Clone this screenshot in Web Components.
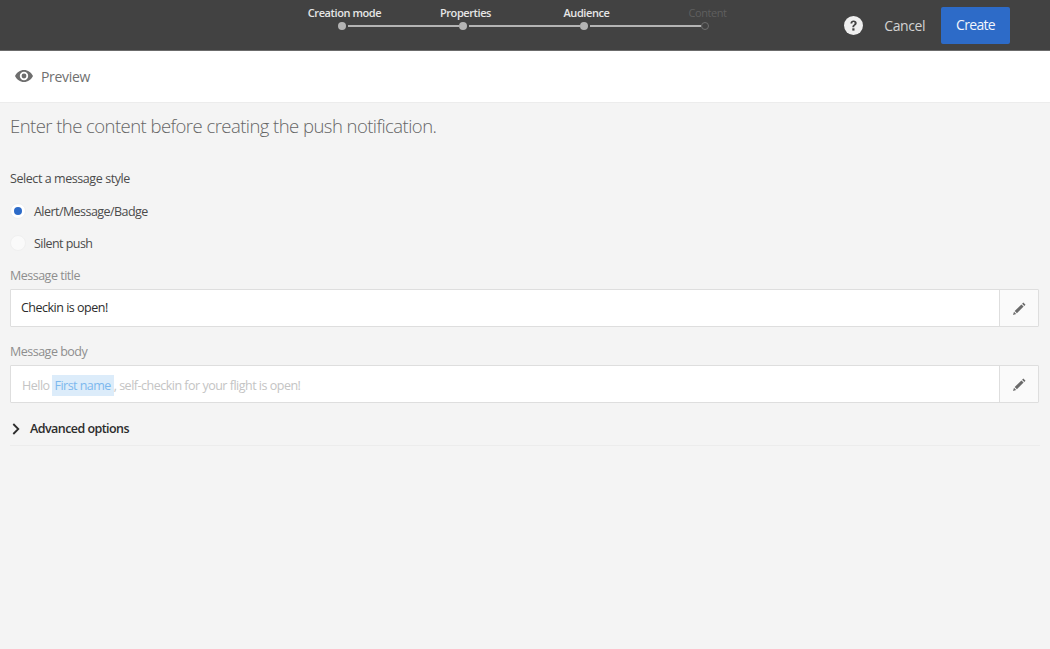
<!DOCTYPE html>
<html lang="en">

<head>
  <meta charset="UTF-8">
  <title>Create push notification</title>
  <style>
    html, body {
      margin: 0;
      height: 100%;
      background: #f4f4f4;
    }

    body {
      font-family: "Open Sans", "Noto Sans", "Liberation Sans", sans-serif;
      overflow: hidden;
    }

    .chip {
      display: inline-block;
      margin-left: 2px;
      padding: 0 3px;
      height: 21px;
      line-height: 21px;
      background: #dcecfa;
      color: #7cb8ee;
      letter-spacing: -0.55px;
    }

    .hint {
      color: #c4c4c4;
    }
  </style>
</head>

<body>

  <wizard-header>
    <wizard-step slot="steps" label="Creation mode"></wizard-step>
    <wizard-step slot="steps" label="Properties"></wizard-step>
    <wizard-step slot="steps" label="Audience"></wizard-step>
    <wizard-step slot="steps" label="Content" pending last></wizard-step>
  </wizard-header>

  <preview-bar>Preview</preview-bar>

  <content-form>
    <radio-option checked>Alert/Message/Badge</radio-option>
    <radio-option>Silent push</radio-option>

    <text-field label="Message title" style="margin-top:7px;--value-pad:0 0 1px 10px"><span style="color:#2c2c2c">Checkin is open!</span></text-field>
    <text-field label="Message body" style="margin-top:15px;--value-pad:2px 0 0 10px">
      <span class="hint" style="padding-left:1px">Hello</span><span class="chip">First name</span><span class="hint">, self-checkin for your flight is open!</span>
    </text-field>

    <advanced-toggle>Advanced options</advanced-toggle>
  </content-form>

  <template id="wizard-header">
    <style>
      :host {
        display: flex;
        align-items: center;
        box-sizing: border-box;
        height: 51px;
        background: #424242;
        border-bottom: 1px solid #6b6b6b;
      }

      .steps {
        display: flex;
        margin-left: 284px;
        align-self: flex-start;
      }

      .actions {
        display: flex;
        align-items: center;
        margin-left: auto;
        margin-right: 40px;
      }

      .help {
        display: block;
        margin-right: 21px;
      }

      .cancel {
        color: #d3d3d3;
        font-size: 14px;
        letter-spacing: -0.42px;
        margin-right: 16px;
      }

      .create {
        width: 69px;
        height: 37px;
        line-height: 36px;
        text-align: center;
        background: #2d6bc8;
        border-radius: 2px;
        color: #f2f6fc;
        font-size: 14px;
        letter-spacing: -0.7px;
      }
    </style>
    <div class="steps"><slot name="steps"></slot></div>
    <div class="actions">
      <svg class="help" width="19" height="19" viewBox="0 0 19 19">
        <circle cx="9.5" cy="9.5" r="9.5" fill="#efefef"></circle>
        <path d="M6.4 7.4c.1-1.9 1.4-3 3.2-3 1.800 0 3.100 1 3.100 2.700 0 1.200-.6 1.900-1.500 2.500-.8.500-1 .9-1 1.700H8.400c-.1-1.300.3-2 1.200-2.600.7-.5 1-.9 1-1.500 0-.7-.4-1.100-1.100-1.100-.7 0-1.100.5-1.200 1.300z" fill="#424242"></path>
        <rect x="8.300" y="12.300" width="2.200" height="2.300" fill="#424242"></rect>
      </svg>
      <span class="cancel">Cancel</span>
      <span class="create">Create</span>
    </div>
  </template>

  <template id="wizard-step">
    <style>
      :host {
        display: block;
        width: 121px;
        position: relative;
        height: 34px;
      }

      .label {
        text-align: center;
        height: 20px;
        padding-top: 5px;
        line-height: 16px;
        font-size: 11px;
        font-weight: 600;
        letter-spacing: -0.42px;
        color: #e6e6e6;
        white-space: nowrap;
      }

      .track {
        display: flex;
        align-items: center;
        height: 8px;
        margin-top: -3px;
        padding-left: 54px;
      }

      .dot {
        flex: none;
        box-sizing: border-box;
        width: 8px;
        height: 8px;
        border-radius: 50%;
        background: #b4b4b4;
      }

      .line {
        flex: none;
        width: 111px;
        height: 2px;
        margin-left: 2px;
        margin-right: -64px;
        background: #b4b4b4;
      }

      :host([pending]) .label {
        color: #5f5f5f;
        font-weight: 400;
      }

      :host([pending]) .dot {
        background: transparent;
        border: 1px solid #6f6f6f;
      }

      :host([last]) .line {
        display: none;
      }
    </style>
    <div class="label"></div>
    <div class="track"><span class="dot"></span><span class="line"></span></div>
  </template>

  <template id="preview-bar">
    <style>
      :host {
        display: flex;
        align-items: center;
        box-sizing: border-box;
        height: 52px;
        padding-left: 15px;
        background: #fff;
        border-bottom: 1px solid #ececec;
        color: #707070;
        font-size: 14px;
        letter-spacing: -0.3px;
      }

      svg {
        display: block;
        margin-right: 8px;
        margin-top: -1px;
      }
    </style>
    <svg width="18" height="12" viewBox="0 0 18 12">
      <path fill-rule="evenodd" d="M9 0C5 0 1.800 2.400 0 6c1.800 3.600 5 6 9 6s7.200-2.400 9-6c-1.800-3.600-5-6-9-6zm0 10.200A4.200 4.200 0 1 1 9 1.800a4.200 4.200 0 0 1 0 8.400z" fill="#6e6e6e"></path>
      <circle cx="9" cy="6" r="2.400" fill="#6e6e6e"></circle>
    </svg>
    <slot></slot>
  </template>

  <template id="content-form">
    <style>
      :host {
        display: block;
        padding: 0 10px;
      }

      h1 {
        margin: 0;
        padding-top: 8px;
        height: 50px;
        box-sizing: border-box;
        line-height: 30px;
        font-size: 18.500px;
        font-weight: 300;
        letter-spacing: -0.55px;
        color: #666;
      }

      .legend {
        margin-top: 16px;
        margin-bottom: 6px;
        height: 20px;
        line-height: 20px;
        font-size: 12.500px;
        letter-spacing: -0.43px;
        color: #4b4b4b;
      }
    </style>
    <h1>Enter the content before creating the push notification.</h1>
    <div class="legend">Select a message style</div>
    <slot></slot>
  </template>

  <template id="radio-option">
    <style>
      :host {
        display: flex;
        align-items: center;
        height: 32px;
        color: #4b4b4b;
        font-size: 12.500px;
        letter-spacing: -0.55px;
      }

      .radio {
        flex: none;
        display: flex;
        align-items: center;
        justify-content: center;
        box-sizing: border-box;
        width: 16px;
        height: 16px;
        margin-right: 8px;
        border-radius: 50%;
        background: #fafafa;
        border: 1px solid #f0f0f0;
      }

      :host([checked]) .radio {
        background: #fff;
      }

      :host([checked]) .radio::after {
        content: "";
        width: 8px;
        height: 8px;
        border-radius: 50%;
        background: #2d6bc8;
      }
    </style>
    <span class="radio"></span>
    <slot></slot>
  </template>

  <template id="text-field">
    <style>
      :host {
        display: block;
        font-size: 12.500px;
        letter-spacing: -0.5px;
      }

      .label {
        height: 20px;
        line-height: 20px;
        color: #8e8e8e;
        margin-bottom: 3px;
      }

      .box {
        display: flex;
        box-sizing: border-box;
        height: 38px;
        width: 1029px;
        background: #fff;
        border: 1px solid #dedede;
        border-radius: 1px;
      }

      .value {
        flex: 1;
        display: flex;
        align-items: center;
        padding: var(--value-pad, 0 0 0 10px);
        white-space: nowrap;
      }

      .edit {
        flex: none;
        display: flex;
        align-items: center;
        justify-content: center;
        box-sizing: border-box;
        width: 39px;
        background: #fafafa;
        border-left: 1px solid #dedede;
      }
    </style>
    <div class="label"></div>
    <div class="box">
      <div class="value"><slot></slot></div>
      <div class="edit">
        <svg width="13" height="13" viewBox="0 0 13 13">
          <path d="M10.300.5l2.200 2.200-1.200 1.200-2.200-2.200zM8.400 2.400l2.200 2.200-6.700 6.700-2.200-2.200zM1 9.800l2.200 2.200-3.200 1z" fill="#6a6a6a"></path>
        </svg>
      </div>
    </div>
  </template>

  <template id="advanced-toggle">
    <style>
      :host {
        display: flex;
        align-items: center;
        box-sizing: border-box;
        height: 42px;
        width: 1030px;
        margin-top: 1px;
        padding-top: 16px;
        padding-bottom: 8px;
        border-bottom: 1px solid #ececec;
        color: #2c2c2c;
        font-size: 12.500px;
        font-weight: 600;
        letter-spacing: -0.55px;
      }

      svg {
        display: block;
        margin-left: 2px;
        margin-right: 10px;
      }
    </style>
    <svg width="8" height="12" viewBox="0 0 8 12">
      <path d="M1.300 1l5 5-5 5" fill="none" stroke="#2c2c2c" stroke-width="1.800"></path>
    </svg>
    <slot></slot>
  </template>

  <script>
    class TemplateElement extends HTMLElement {
      constructor(tagName) {
        super();
        const template = document.querySelector(`template#${tagName}`);
        this.attachShadow({ mode: "open" }).appendChild(template.content.cloneNode(true));
      }
    }

    class WizardHeader extends TemplateElement {
      constructor() { super("wizard-header"); }
    }

    class WizardStep extends TemplateElement {
      constructor() { super("wizard-step"); }

      connectedCallback() {
        this.shadowRoot.querySelector(".label").textContent = this.getAttribute("label");
      }
    }

    class PreviewBar extends TemplateElement {
      constructor() { super("preview-bar"); }
    }

    class ContentForm extends TemplateElement {
      constructor() { super("content-form"); }
    }

    class RadioOption extends TemplateElement {
      constructor() { super("radio-option"); }
    }

    class TextField extends TemplateElement {
      constructor() { super("text-field"); }

      connectedCallback() {
        this.shadowRoot.querySelector(".label").textContent = this.getAttribute("label");
      }
    }

    class AdvancedToggle extends TemplateElement {
      constructor() { super("advanced-toggle"); }
    }

    customElements.define("wizard-header", WizardHeader);
    customElements.define("wizard-step", WizardStep);
    customElements.define("preview-bar", PreviewBar);
    customElements.define("content-form", ContentForm);
    customElements.define("radio-option", RadioOption);
    customElements.define("text-field", TextField);
    customElements.define("advanced-toggle", AdvancedToggle);
  </script>
</body>

</html>
